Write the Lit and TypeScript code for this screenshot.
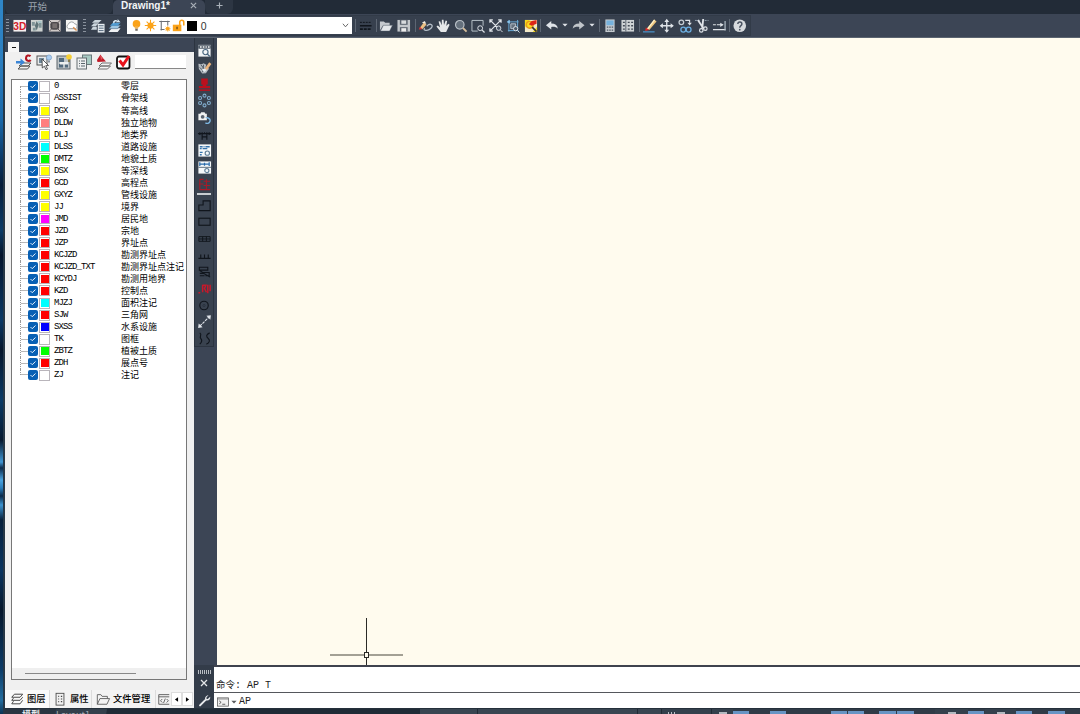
import { LitElement, html, css, svg, SVGTemplateResult, nothing } from "lit";
import { customElement, property } from "lit/decorators.js";

const W = "#dfe3e8";
const K = "#10151c";

/* Every glyph is drawn on a 16 x 16 grid. */
const ICONS: Record<string, SVGTemplateResult> = {
  threeD: svg`<rect x="1.500" y="2" width="13" height="12" fill="#f4f0f0"/><text x="8" y="12" text-anchor="middle" font-size="11.500" font-weight="700" font-family="Liberation Sans, sans-serif" fill="#d2202c" textLength="13.500" lengthAdjust="spacingAndGlyphs">3D</text>`,
  mapA: svg`<rect x="2" y="2" width="12" height="12" fill="#cdd2d0"/><path d="M3 4h3v4H3zM10 5h3v5h-3zM4 10h3v3H4z" fill="#7f9497"/><path d="M8 3l2 4-2 6-2-5z" fill="#5d7377"/><path d="M9 3h4v2H9z" fill="#a7c4c8"/>`,
  mapB: svg`<rect x="2" y="2" width="12" height="12" fill="#cfc9c7"/><rect x="3.500" y="4" width="9" height="8" rx="2.500" fill="#4d494b"/><rect x="5.500" y="5.500" width="5" height="5" fill="#77706f"/><path d="M2 2l3 3M14 2l-3 3M2 14l3-3M14 14l-3-3" stroke="#5b5658"/>`,
  cloud: svg`<rect x="2" y="2" width="12" height="12" fill="#f4f4f2"/><path d="M4.500 11a2.500 2.500 0 0 1 0-4.500 3.500 3.500 0 0 1 6.500-.5 2.600 2.600 0 0 1 1 5z" fill="#fff" stroke="#9a9da0"/><path d="M9.500 9.500l3.500 3.500" stroke="#d98d4d" stroke-width="1.500"/>`,
  layerPanel: svg`<path d="M5 2h7L9 5H2zM4 5.500h5L6 8.500H1zM3 9h4v3H1z" fill="#cbd5dc"/><rect x="8" y="6" width="7" height="9" fill="#e9eef2"/><path d="M9 8h5M9 10.500h5M9 13h5" stroke="#51657a"/>`,
  layerPrev: svg`<path d="M5 10.500h9l-3 4H1.500z" fill="#f0f2f4"/><path d="M5 7.500h9L11 11H2z" fill="#9ec6e2" stroke="#48627a" stroke-width=".5"/><path d="M6 5h8l-3 3H3z" fill="#4f9bd2"/><path d="M6 4c2-3 4-2 5-1V1l3 3.500h-5l1-1C9 3 8 4 7 6z" fill="#d9e9f4"/>`,
  bulb: svg`<circle cx="8" cy="6" r="4.700" fill="#fba319"/><path d="M6 9h4v3H6z" fill="#f2b452"/><path d="M6.500 12h3v2.500h-3z" fill="#736b61"/>`,
  sun: svg`<circle cx="8" cy="8" r="3.800" fill="#fba319"/><path d="M8 1v14M1 8h14M3.200 3.200l9.600 9.600M12.800 3.200l-9.600 9.600" stroke="#fba319" stroke-width="1.300"/>`,
  vpSun: svg`<path d="M3 3h10M3 13h5M4 2v12M12 2v6M1.500 3h3M11 3h3.500" stroke="#6b6f75" stroke-width="1.300" fill="none"/><circle cx="12" cy="12" r="2.300" fill="#fba319"/><path d="M12 8.500v7M8.500 12h7M9.500 9.500l5 5M14.500 9.500l-5 5" stroke="#fba319" stroke-width=".9"/>`,
  unlock: svg`<path d="M1 7h10.500v8H1z" fill="#fba319"/><path d="M9.500 8V4a2.500 2.500 0 0 1 5 0v4" stroke="#fba319" stroke-width="1.900" fill="none"/><path d="M6.200 9.500v3" stroke="#604019" stroke-width="1.500"/>`,
  lines: svg`<path d="M2 4.500h12" stroke="${K}" stroke-dasharray="2 1"/><path d="M2 8h12" stroke="${K}" stroke-width="1.600"/><path d="M2 11.500h12" stroke="${K}" stroke-width="2" stroke-dasharray="3 1"/>`,
  open: svg`<path d="M2 13V3.500h4l1.500 1.500H12V8H5z" fill="#c5c9ce"/><path d="M5.500 7.500H15l-3 6H2.500z" fill="#e4e7ea" stroke="#4b5563" stroke-width=".5"/>`,
  save: svg`<path d="M1.500 2h13v12h-13z" fill="#c3c7cb"/><rect x="4" y="2" width="8" height="5" fill="#59616c"/><rect x="5.500" y="2.500" width="5" height="3.500" fill="#d8dbdd"/><rect x="4" y="9.500" width="8" height="4.500" fill="#59616c"/><rect x="5.500" y="10.500" width="5" height="3.500" fill="#ececec"/>`,
  editLoop: svg`<path d="M2 10l4-5.500 2.800 2.300L4.500 11.500z" fill="#eabf83"/><path d="M.8 11.800L2 9l2.500 2.500z" fill="#d33"/><path d="M7 10.500c-2.500 2 1.500 3 4.500 1.500s4.500-4.500 1.500-5.500c-2-.4-3 1-4 2" stroke="#b5bec8" stroke-width="1.300" fill="none"/><path d="M4 5l3-2 1.500 3z" fill="#f5efe4"/>`,
  hand: svg`<path d="M6 14.500L1.500 8.800l1.400-1 2.400 2L3.700 3.700l1.600-.4 1.600 4.300L7.100 1.700h1.700l.5 5.500L11 2.500l1.500.5-.9 5.200 2.200-2.300 1.300 1L11.500 14.500z" fill="#e6e8e9"/>`,
  zoom: svg`<circle cx="7" cy="7" r="4.400" fill="#65707c" stroke="#b9c0c7" stroke-width="1.200"/><path d="M10.300 10.300l3.700 3.700" stroke="#d5bd9c" stroke-width="1.900"/>`,
  zoomWin: svg`<path d="M8 13.500H2V2.500h11.500V8" fill="none" stroke="#b9c3ca"/><circle cx="10.500" cy="10.500" r="2.500" fill="none" stroke="${W}"/><path d="M12.500 12.500l2.500 2.500" stroke="${W}" stroke-width="1.300"/>`,
  zoomExt: svg`<path d="M2.500 2.500l9 9M13 2.500l-10.500 10.500M2 5V2h3M10.500 2h3v3M2 10.500v3h3" fill="none" stroke="${W}" stroke-width="1.300"/><circle cx="11" cy="10.500" r="2.300" fill="#485463" stroke="${W}"/><path d="M13 12.500l2 2" stroke="${W}"/>`,
  zoomObj: svg`<path d="M2 4h12M3 13h11M4 2v12M13 2v10" stroke="#68a9d6"/><path d="M6 6h5v5H6z" fill="#64707d" stroke="#b8c4cf"/><path d="M2 4l3-2v4z" fill="#8bc5ec"/><circle cx="11" cy="11" r="2.200" fill="#4b5968" stroke="${W}"/><path d="M13 13l2 2" stroke="${W}"/>`,
  redZoom: svg`<rect x="2" y="2" width="12.500" height="12.500" fill="#f2e9c7"/><path d="M2 2h5L2 10zM10 14.500h4.500V9z" fill="#f5d91d"/><circle cx="7" cy="7" r="3.500" fill="#f9dd20" stroke="#e89a18" stroke-width="1.500"/><path d="M6 6.500L9 3l5-1v4L9 8z" fill="#dc2519"/><path d="M9.500 9.500L14 14" stroke="#38322d" stroke-width="1.800"/>`,
  undo: svg`<path d="M2 7.500L7.500 3.200v2.600c4 0 6.300 1.700 6.800 5.200-1.800-1.800-3.800-2.100-6.800-1.800v2.600z" fill="${W}"/>`,
  redo: svg`<path d="M14 7.500L8.500 3.200v2.600c-4 0-6.300 1.700-6.800 5.200 1.800-1.800 3.800-2.100 6.800-1.800v2.600z" fill="#c0c5ca"/>`,
  down: svg`<path d="M1 4.500h14L8 12z" fill="${W}"/>`,
  calc: svg`<rect x="3.500" y="1.500" width="9.500" height="13" fill="#c6cbd0"/><rect x="4.500" y="2.500" width="7.500" height="5" fill="#76b2dd"/><path d="M5 9.500h6.500M5 12.500h6.500" stroke="#4e5966" stroke-width="1.300" stroke-dasharray="1.500 1"/>`,
  sheet: svg`<rect x="1.500" y="2" width="13" height="12" fill="#cfd3d5"/><path d="M6 2v12" stroke="#59626d"/><path d="M3 4.500h2M3 8h2M3 11.500h2M8 4.500h2M8 8h2M8 11.500h2M11.500 4.500h2M11.500 8h2M11.500 11.500h2" stroke="#454d57" stroke-width="1.500"/>`,
  pencil: svg`<path d="M5 11l7.500-9.500 2.500 2L7.500 12.500z" fill="#efc77f"/><path d="M5 11l7.500-9.500 1 .8L6 12z" fill="#fff2c9"/><path d="M3.300 13.500L4 9.800 7.500 12.300z" fill="#dd2d2d"/><path d="M1 14.300h12" stroke="#4a90c6" stroke-width="1.300"/>`,
  move: svg`<path d="M8 2v12M2 8h12" stroke="${W}" stroke-width="1.400"/><path d="M8 .7L10.500 4h-5zM8 15.300L5.500 12h5zM.7 8L4 5.500v5zM15.300 8L12 5.500v5z" fill="${W}"/>`,
  copy: svg`<circle cx="4.500" cy="4.500" r="2.400" fill="none" stroke="#c6cdd3" stroke-width="1.300"/><path d="M8.500 2.500H13V5" fill="none" stroke="${W}" stroke-width="1.200"/><path d="M10.800 5h4.500L13 7.800z" fill="${W}"/><circle cx="6.500" cy="12" r="2.500" fill="none" stroke="#6caee0" stroke-width="1.300"/><circle cx="12" cy="12" r="2.500" fill="none" stroke="#6caee0" stroke-width="1.300"/>`,
  trim: svg`<path d="M1 2.500h5M11 2.500h4" stroke="#96a5b4" stroke-dasharray="2 1"/><path d="M4 2l6 9M9.500 1L8.500 11" stroke="${W}" stroke-width="1.900"/><circle cx="7.500" cy="12.800" r="1.800" fill="none" stroke="${W}" stroke-width="1.200"/><circle cx="11.700" cy="11" r="1.800" fill="none" stroke="${W}" stroke-width="1.200"/>`,
  extend: svg`<path d="M1 7h3M5 7h6M1 12h13" stroke="${W}" stroke-width="1.100"/><path d="M8.500 4.800L12 7 8.500 9.200z" fill="${W}"/><path d="M13.500 3v10" stroke="#adb8c2" stroke-width="1.300"/>`,
  help: svg`<circle cx="8" cy="8" r="6.500" fill="#d7dadd"/><path d="M6 6.200c.2-2.700 4.200-2.600 4.200 0C10.200 8 8 7.800 8 10" fill="none" stroke="#4a5361" stroke-width="1.500"/><circle cx="8" cy="12" r=".9" fill="#4a5361"/>`,

  setCur: svg`<path d="M6 9h9l-3 3H3zM5 12h9l-2.500 3H2z" fill="#f4f4f4" stroke="#555"/><path d="M0 7h4.500V4.500l4.500 3.700-4.500 3.600V9.500H0z" fill="#3b85d6"/><path d="M14.500 2.300c-1.500-1.500-4.500-1-4.500 2s3.500 3.200 4.700 1.700" fill="none" stroke="#b3131f" stroke-width="2.100"/>`,
  pick: svg`<rect x="1" y="2" width="10" height="9" fill="#e8ebec" stroke="#555"/><path d="M3 4h5v5H3z" fill="#71899a"/><path d="M6 5l6.500 6.500-2.700.2 1.700 3.300-1.500.7-1.600-3.500L6.300 14z" fill="#fff" stroke="#333" stroke-width=".8"/><circle cx="13" cy="3.500" r="2.600" fill="#a9cdf1" stroke="#7799c2" stroke-width=".7"/><path d="M12 6.500h2v2h-2z" fill="#8c97a3"/>`,
  pickOn: svg`<rect x="1" y="2" width="13" height="13" fill="#bdc4c8" stroke="#5c646b"/><path d="M3 4h5v4H3zM3 10h4v3.500H3zM9 10h3v3.500H9z" fill="#50697c"/><path d="M4 8h8v2.500H4z" fill="#ecefef"/><circle cx="13" cy="3" r="2.800" fill="#f6cf35"/><path d="M12 5.500h2V8h-2z" fill="#857a4c"/>`,
  compare: svg`<rect x="6.500" y="1" width="9" height="9.500" fill="#a8cbc4" stroke="#68787b"/><rect x="1" y="4" width="9.500" height="11" fill="#eef0f1" stroke="#666e73"/><path d="M3 7h1M5 7h4M3 9.500h1M5 9.500h4M3 12h1M5 12h4" stroke="#59656c" stroke-width="1.200"/>`,
  delLayer: svg`<path d="M6 9h9.500l-3 3H3zM5 12h9.500l-3 3H2z" fill="#f4f4f4" stroke="#727272"/><path d="M1 6L4.500.5 6 3l4 4.500-8.500.5z" fill="#bf1b28"/><path d="M4 1l3 3-2 2z" fill="#e2575d"/>`,
  redCheck: svg`<rect x="2" y="2.500" width="12.500" height="12" rx="2" fill="#fff" stroke="#111" stroke-width="1.800"/><path d="M4.500 6.500l3.500 4.500L14 2" fill="none" stroke="#e8131c" stroke-width="3"/>`,

  codeFind: svg`<rect x="1.500" y="2" width="13" height="12.500" fill="#f2f5f7"/><rect x="1.500" y="2.500" width="13" height="3.500" fill="#34404f"/><path d="M3 4.300h2M6 4.300h2M9 4.300h1.500M11.500 4.300h2" stroke="#fff" stroke-width="1.500"/><circle cx="9" cy="9.700" r="2.800" fill="none" stroke="#48657e" stroke-width="1.200"/><path d="M11 11.700l2.700 2.700" stroke="#48657e" stroke-width="1.300"/>`,
  paint: svg`<path d="M1.500 4l3.500.5L7 3.500l3 1.500-1 3 4 1-3.500 5-4 .5L2 9.500z" fill="#b6bcc2"/><path d="M4 5l5 6M3 8l5 5M7 5l-1 8" stroke="#4b5460"/><path d="M8 9.500L13 2.500l2.300 1.800-5 6.700z" fill="#edb57e"/><path d="M5 10l3-1 2.500 1.700L7.500 13z" fill="#e9eef2"/>`,
  stamp: svg`<path d="M4.500 1.500h7v6.500h-1.500v1.500H14v2.500H2V9.500h4V8H4.500z" fill="#bb101d"/><path d="M2 14h12" stroke="#bb101d" stroke-width="1.600"/>`,
  ring: svg`<g fill="none" stroke="#83afcf" stroke-width="1.100"><circle cx="8" cy="2.800" r="1.600"/><circle cx="3.300" cy="5.300" r="1.600"/><circle cx="12.700" cy="5.300" r="1.600"/><circle cx="3.300" cy="10.600" r="1.600"/><circle cx="12.700" cy="10.600" r="1.600"/><circle cx="8" cy="13.200" r="1.600"/></g>`,
  camera: svg`<path d="M1.500 4h2l1-1.500h3.500L9 4h1.500v7h-9z" fill="#f1f3f3"/><circle cx="6" cy="7.300" r="2" fill="#5b6571"/><path d="M9 13.500a3 3 0 1 0 2-5.200l2.500 1.500" fill="none" stroke="#7eb8e4" stroke-width="1.500"/>`,
  fence: svg`<path d="M1 7h14M5.500 10.500h5M3 5.500v3M13 5.500v3M5.500 5.500v8M10.500 5.500v8M8 5.500V7" stroke="${K}" stroke-width="1.200"/>`,
  codeBox: svg`<rect x="1.500" y="1.500" width="13.500" height="13" fill="#f5f8fa"/><path d="M3 4h3M7 4h1M9 4h4.500M3 6h2M6 6h5" stroke="#3673ac" stroke-width="1.400"/><path d="M3 10h3M3 12.500h2" stroke="#3673ac" stroke-width="1.500"/><circle cx="11" cy="10.800" r="2.300" fill="none" stroke="#5e7d97" stroke-width="1.200"/>`,
  dimBox: svg`<rect x="1.500" y="1.500" width="13.500" height="13" fill="#f5f8fa"/><path d="M3 2.500v4M13 2.500v4M3 4.500h10M8 3v3" stroke="#276aab" stroke-width="1.300"/><path d="M1.500 7.800h13.500" stroke="#567"/><circle cx="10.500" cy="11.200" r="2.200" fill="none" stroke="#5e7d97" stroke-width="1.200"/>`,
  redNote: svg`<path d="M3 2.500v11M3 2.500h4M2 7.500h5M3 13.500h11M7 4.500h7M10 2.500v11M7 9h7" fill="none" stroke="#a81a28" stroke-width="1.200"/>`,
  poly: svg`<path d="M2 13.500V7.500h4.500V3H14v10.500z" fill="none" stroke="${K}" stroke-width="1.200"/>`,
  rect: svg`<rect x="2" y="4.500" width="12" height="7.500" fill="none" stroke="${K}" stroke-width="1.200"/>`,
  bar: svg`<path d="M2 6h12v5H2zM2 8.500h12M6 6v5M10 6v5" fill="none" stroke="${K}" stroke-width="1"/>`,
  comb: svg`<path d="M1.500 11h13M4 11V7M8 11V7M12 11V7" fill="none" stroke="${K}" stroke-width="1.200"/>`,
  scroll: svg`<path d="M2.500 3.500h9v3h-9zM3 7l3 2h7v3.500H9M3 10h4l7 4M3 12.500h5" fill="none" stroke="${K}" stroke-width="1.200"/>`,
  redDot: svg`<path d="M1.500 12.500h2M6 4v8M6 4.500h3.500L8 8l2 4M11.500 4v9M14 4v7" stroke="#c8182a" stroke-width="1.600" fill="none"/>`,
  circle: svg`<circle cx="7.500" cy="8" r="4.500" fill="none" stroke="${K}" stroke-width="1.200"/><circle cx="7.500" cy="8" r="1.200" fill="none" stroke="#252d38" stroke-width=".7"/>`,
  diag: svg`<path d="M3 13L13 3" stroke="${W}" stroke-width="1.200" stroke-dasharray="3 1"/><path d="M14.800 1.200L14.200 6 10 1.800zM1.200 14.800L1.800 10 6 14.200z" fill="${W}"/>`,
  waves: svg`<path d="M3 2c3 2-1 4 1 6s1 4-1 6M13.500 2c-4 2-4 4-1.500 6s1 5-2 6" fill="none" stroke="${K}" stroke-width="1.200"/>`,

  tabLayers: svg`<path d="M5 2.500h9.500L11.500 6H2zM4 7l-2 2.500h9.500L14.500 6M4 10.500L2 13.500h9.500l3-4" fill="none" stroke="#444" stroke-width="1.100"/>`,
  tabProps: svg`<rect x="3.500" y="1.500" width="9" height="13.500" fill="#f1f1f1" stroke="#4c4c4c"/><path d="M6 5h1M9 5h1.500M6 8h1M9 8h1.500M6 11h1M9 11h1.500" stroke="#444" stroke-width="1.200"/>`,
  tabFiles: svg`<path d="M1.500 14V3h4l1.500 2h6v2.500M1.500 14L4.500 7.500H15.500l-3 6.500z" fill="none" stroke="#5a5a5a"/>`,
  tabCode: svg`<path d="M14 14H2V3h12M2 5.500h12M6 8l-2 2 2 2M11 8l2 2-2 2M9.500 7.500l-2 5" fill="none" stroke="#555"/>`,
  left: svg`<path d="M13 1v14L3 8z" fill="#000"/>`,
  right: svg`<path d="M3 1v14l10-7z" fill="#000"/>`,
  close: svg`<path d="M2 2l12 12M14 2L2 14" stroke="currentColor" stroke-width="2.600"/>`,
  plus: svg`<path d="M8 1v14M1 8h14" stroke="currentColor" stroke-width="2.600"/>`,
  wrench: svg`<path d="M2.500 14L9 7.500" stroke="#e8eaec" stroke-width="2.500" stroke-linecap="round"/><path d="M13 1.500L10.500 4v2H12l3-2.500c.5 3-1.500 5-4.500 4.500C7.500 7.500 8 2 13 1.500z" fill="#e8eaec"/>`,
  prompt: svg`<rect x=".7" y="2.500" width="14.600" height="11" fill="#f0f0f0" stroke="#555"/><path d="M1 4h14" stroke="#777"/><path d="M3 6.500l2.500 2L3 10.500M7 11h4" fill="none" stroke="#333"/>`,
  chevron: svg`<path d="M2 4l6 7 6-7" fill="none" stroke="#555" stroke-width="2"/>`,
};

@customElement("cad-icon")
export class CadIcon extends LitElement {
  @property() name = "";
  static styles = css`
    :host { display: flex; flex: none; width: 17.5px; height: 16px; align-items: center; justify-content: center; }
    svg { display: block; flex: none; width: var(--glyph, 15.5px); height: var(--glyph, 15.5px); overflow: visible; }
  `;
  render() {
    return html`<svg viewBox="0 0 16 16">${ICONS[this.name] ?? nothing}</svg>`;
  }
}

const icons = (names: string) => names.split(" ").map((n) => html`<cad-icon name=${n}></cad-icon>`);

const Y = "#ffff00";
const RED = "#ff0000";
const LAYERS: [string, string, string][] = [
  ["0", "零层", "#fff"], ["ASSIST", "骨架线", "#fff"], ["DGX", "等高线", Y],
  ["DLDW", "独立地物", "#ff7f7f"], ["DLJ", "地类界", Y], ["DLSS", "道路设施", "#00ffff"],
  ["DMTZ", "地貌土质", "#00ff00"], ["DSX", "等深线", Y], ["GCD", "高程点", RED],
  ["GXYZ", "管线设施", Y], ["JJ", "境界", Y], ["JMD", "居民地", "#ff00ff"],
  ["JZD", "宗地", RED], ["JZP", "界址点", RED], ["KCJZD", "勘测界址点", RED],
  ["KCJZD_TXT", "勘测界址点注记", RED], ["KCYDJ", "勘测用地界", RED], ["KZD", "控制点", RED],
  ["MJZJ", "面积注记", "#00ffff"], ["SJW", "三角网", RED], ["SXSS", "水系设施", "#0000ff"],
  ["TK", "图框", "#fff"], ["ZBTZ", "植被土质", "#00ff00"], ["ZDH", "展点号", RED], ["ZJ", "注记", "#fff"],
];

@customElement("layer-panel")
export class LayerPanel extends LitElement {
  static styles = css`
    :host { display: flex; flex-direction: column; width: 189px; flex: none; background: #f0f0f0; color: #000; }
    .head { height: 14px; flex: none; background: #3c4555; display: flex; align-items: flex-end; padding-left: 3px; }
    .min { width: 11px; height: 10px; background: #f6f6f6; display: grid; place-items: center; }
    .min::before { content: ""; width: 4px; height: 1px; background: #111; }
    .tools { height: 27px; flex: none; display: flex; align-items: center; padding: 0 7px 7px 9px; box-sizing: border-box; --glyph: 16px; }
    .tools cad-icon { width: 19.900px; }
    .search { width: 51px; height: 14px; margin-left: 2px; background: #fff; border-bottom: 1px solid #888; box-sizing: border-box; }
    .tree { flex: 1; margin: 0 7px 0 6px; border: 1px solid #777; background: #fff; display: flex; flex-direction: column; justify-content: space-between; overflow: hidden; }
    .rows { padding-top: 0.450px; }
    .row { height: 12.040px; display: flex; align-items: center; padding-left: 8px; font: 9px/12px "Liberation Mono", "Noto Sans CJK SC", monospace; white-space: nowrap; }
    .branch { width: 7px; align-self: stretch; flex: none; border-left: 1px dotted #999; background: linear-gradient(#b8b8b8, #b8b8b8) 0 50% / 7px 1px no-repeat; }
    .row:first-child .branch { margin-top: 6px; background-position: 0 0; }
    .row:last-child .branch { margin-bottom: 6px; background-position: 0 100%; }
    .check { width: 10px; height: 10px; flex: none; border-radius: 2px; background: #0860b4; margin-right: 1px; display: grid; place-items: center; }
    .check svg { width: 8px; height: 8px; }
    .color { width: 11px; height: 11px; flex: none; box-sizing: border-box; border: 1px solid #b9b5bb; padding: 0.500px; background-clip: content-box; }
    .code { width: 67px; margin-left: 4px; letter-spacing: -0.900px; }
    .name { font-family: "Noto Sans CJK SC", sans-serif; }
    .scroll { height: 11px; background: #efefef; display: flex; align-items: center; padding-left: 13px; }
    .thumb { width: 111px; height: 1.500px; background: #888; }
    .tabs { height: 18px; flex: none; margin-top: 10px; display: flex; align-items: center; font: 500 9.300px/16px "Noto Sans CJK SC", sans-serif; background: #f3f3f3; color: #000; white-space: nowrap; --glyph: 14px; }
    .tab { display: flex; align-items: center; box-sizing: border-box; height: 18px; border-right: 1px solid #dcdcdc; }
    .tab span { height: 18px; margin-left: 1.500px; }
    .tab.on { width: 45px; padding-left: 3px; background: #fafafa; }
    .tab.p { width: 42px; padding-left: 1px; }
    .tab.f { width: 64px; padding-left: 2px; }
    .tab.c { width: 15px; border: 0; padding-left: 1px; }
    .tab.c cad-icon { width: 14px; }
    .arrow { width: 11px; height: 14px; border: 1px solid #ddd; box-sizing: border-box; background: #fff; display: grid; place-items: center; --glyph: 5px; }
    .arrow cad-icon { width: 5px; height: 5px; }
  `;
  render() {
    return html`
      <div class="head"><div class="min"></div></div>
      <div class="tools">${icons("setCur pick pickOn compare delLayer redCheck")}<div class="search"></div></div>
      <div class="tree">
        <div class="rows">
          ${LAYERS.map(([code, name, color]) => html`
            <div class="row">
              <span class="branch"></span>
              <span class="check"><svg viewBox="0 0 8 8"><path d="M1.500 4l1.700 1.700L6.500 2.500" fill="none" stroke="#e6f1fb" stroke-width="1"/></svg></span>
              <span class="color" style="background-color:${color}"></span>
              <span class="code">${code}</span><span class="name">${name}</span>
            </div>`)}
        </div>
        <div class="scroll"><div class="thumb"></div></div>
      </div>
      <div class="tabs">
        <div class="tab on">${icons("tabLayers")}<span>图层</span></div>
        <div class="tab p">${icons("tabProps")}<span>属性</span></div>
        <div class="tab f">${icons("tabFiles")}<span>文件管理</span></div>
        <div class="tab c">${icons("tabCode")}</div>
        <div class="arrow">${icons("left")}</div>
        <div class="arrow">${icons("right")}</div>
      </div>
    `;
  }
}

/* Status strip segments: kind and width. */
const STATUS: [string, number][] = [
  ["dark", 305], ["mid", 58], ["mid", 160], ["mid", 24], ["ticks", 50], ["lamp", 21], ["on", 17],
  ["off", 20], ["on", 17], ["off", 44], ["on", 17], ["on", 17], ["off", 14], ["on", 18],
  ["on", 18], ["off", 20], ["lamp", 33], ["on", 17], ["lamp", 31], ["on", 17], ["off", 15],
  ["on", 18], ["off", 15],
];

@customElement("app-root")
export class AppRoot extends LitElement {
  static styles = css`
    :host { display: flex; width: 1080px; height: 714px; overflow: hidden; background: #3c4555; font-family: "Liberation Sans", "Noto Sans CJK SC", sans-serif; }
    .desk { width: 5px; flex: none; box-sizing: border-box; border-right: 2px solid #263746;
      background: linear-gradient(#2f86c7 0, #2c7fc0 60px, #1967a8 120px, #0a3765 160px, #061d3a 185px, #0c3c68 230px, #04142c 255px, #0b3966 320px, #06162c 350px, #0a3a66 400px, #05182f 440px, #3f95d2 462px, #0a2a4c 468px, #4aa3df 480px, #287cba 488px, #08294a 496px, #3b93d0 505px, #07203c 520px, #0a3560 570px, #06172c 610px, #0c3c68 670px, #246d9f 700px, #0b3354 714px); }
    .app { flex: 1; min-width: 0; display: flex; flex-direction: column; }
    .docs { height: 14px; flex: none; display: flex; background: #222b37; color: #9ba3ad; font-size: 10px; line-height: 12px; white-space: nowrap; }
    .doc { display: flex; box-sizing: border-box; border-radius: 0 0 6px 6px; }
    .doc.start { width: 108px; padding-left: 23px; background: #2b3441; font-family: "Noto Sans CJK SC", sans-serif; font-size: 9.500px; line-height: 12px; }
    .doc.active { width: 92px; padding: 0 7px 0 8px; justify-content: space-between; background: #3c4555; color: #f3f5f7; font-weight: 700; border-radius: 5px 5px 0 0; }
    .docs cad-icon { width: 9px; height: 11px; --glyph: 7px; color: #aab1b9; }
    .doc.add { width: 28px; justify-content: center; background: #2d3643; }
    .bar { height: 24px; flex: none; box-sizing: border-box; display: flex; align-items: center; background: #3c4555; border-bottom: 1px solid #5b6470; }
    .inner { display: flex; align-items: center; height: 19px; width: 745px; background: #37404e; box-shadow: 0 0 0 1px #323b48; }
    .sep { width: 1px; height: 13px; background: #5d6673; flex: none; }
    .grip { width: 3px; height: 13px; flex: none; background: repeating-linear-gradient(#8a929d 0 1px, transparent 1px 3px); }
    .s1 { margin: 0 1.500px 0 1px; } .s2 { margin: 0 2.500px 0 2.500px; }
    .s3 { margin: 0 0.500px 0 3px; } .s4 { margin: 0 0.700px 0 1.500px; } .s5 { margin: 0 1px 0 2.500px; }
    .s6 { margin: 0 1.700px 0 1px; } .s7 { margin: 0 1px 0 2px; } .s8 { margin: 0 1px 0 2.500px; } .s9 { margin: 0 1px 0 1px; }
    .layer { width: 225px; height: 17px; flex: none; box-sizing: border-box; margin-left: 3.500px; padding: 0 2px; background: #fff; display: flex; align-items: center; font-size: 10.500px; color: #333; }
    .layer cad-icon { width: 14.200px; --glyph: 13px; }
    .swatch { width: 10px; height: 10px; background: #000; margin: 0 4px 0 1px; }
    .layer span { flex: 1; }
    .layer cad-icon.chev { --glyph: 7px; width: 9px; }
    .inner .dd { --glyph: 6px; width: 9.600px; padding-bottom: 2px; }
    .body { flex: 1; min-height: 0; display: flex; }
    .right { flex: 1; min-width: 0; display: flex; flex-direction: column; }
    .work { height: 627px; flex: none; display: flex; }
    .side { width: 23px; flex: none; background: #3c4555; }
    .strip { width: 20px; height: 309px; box-sizing: border-box; border: 1px solid #2c3440; border-top: 0; background: #39424f; display: flex; flex-direction: column; align-items: center; }
    .dots { width: 10px; height: 2px; margin: 2px 0 2.500px; background: repeating-linear-gradient(90deg, #8a929d 0 2px, transparent 2px 3px); }
    .strip cad-icon { height: 16.700px; width: 18px; --glyph: 15px; }
    .rule { width: 14px; height: 2px; background: #c9cdd1; margin: 0.500px 0 1.500px; flex: none; }
    .canvas { flex: 1; position: relative; background: #fffbee; }
    .cross { position: absolute; left: 113px; top: 580px; width: 74px; height: 47px; }
    .cmd { flex: 1; display: flex; }
    .cmdbar { width: 20px; flex: none; display: flex; flex-direction: column; align-items: center; background: #333c49; color: #e5e7e9; }
    .cmdbar .dots { margin: 5px 0 2px; width: 13px; height: 4px; background: repeating-linear-gradient(90deg, #b8bdc3 0 1px, transparent 1px 2px); }
    .cmdbar cad-icon { --glyph: 8px; height: 13px; }
    .cmdbar cad-icon.wr { --glyph: 13px; height: 16px; margin-top: 3px; }
    .lines { flex: 1; display: flex; flex-direction: column; background: #fff; border-top: 2px solid #3f424d; font: 10px/12px "Liberation Mono", "Noto Sans CJK SC", monospace; color: #222; white-space: pre; }
    .hist { height: 26px; box-sizing: border-box; padding: 13px 0 0 2px; line-height: 11px; border-bottom: 1px solid #55575c; }
    .cjk { font-size: 9.500px; }
    .input { flex: 1; display: flex; align-items: center; padding: 1px 0 0 2px; }
    .input cad-icon { width: 13px; --glyph: 12px; }
    .input cad-icon.mini { width: 8px; margin: 0 1px; --glyph: 6px; filter: brightness(0.4); }
    .status { height: 6px; flex: none; display: flex; overflow: hidden; background: #2a3541; border-top: 1px solid #25303b; box-sizing: border-box; }
    .model { width: 110px; flex: none; padding-left: 17px; box-sizing: border-box; color: #e4e8ec; font: 700 9px/9px "Noto Sans CJK SC", sans-serif; background: linear-gradient(100deg, #2a3541 50px, #34404c 51px, #34404c 100px, #202b36 101px); white-space: nowrap; padding-top: 1px; }
    .model span { margin-left: 16px; font-weight: 400; color: #a6adb5; }
    .seg { flex: none; box-sizing: border-box; }
    .dark { background: #202b36; }
    .mid { background: #394551; border-right: 1px solid #202a34; }
    .on { border-top: 2px solid #303b47; border-right: 1px solid #303b47; background: #6794c4; }
    .off { background: #303b47; }
    .ticks { background: repeating-linear-gradient(90deg, #b8bec5 0 1px, transparent 1px 3px) 6px 3px / 8px 2px no-repeat #34404c; border-right: 1px solid #202a34; }
    .lamp { background: linear-gradient(#b2b9c0, #b2b9c0) 50% 3px / 8px 2px no-repeat #34404c; }
  `;
  render() {
    return html`
      <div class="desk"></div>
      <div class="app">
        <div class="docs">
          <div class="doc start">开始</div>
          <div class="doc active"><span>Drawing1*</span>${icons("close")}</div>
          <div class="doc add">${icons("plus")}</div>
        </div>
        <div class="bar">
          <div class="inner">
            <div class="grip s1"></div>${icons("threeD mapA mapB cloud")}
            <div class="grip s2"></div>${icons("layerPanel layerPrev")}
            <div class="layer">${icons("bulb sun vpSun unlock")}<div class="swatch"></div><span>0</span><cad-icon class="chev" name="chevron"></cad-icon></div>
            <div class="sep s3"></div>${icons("lines")}
            <div class="sep s4"></div>${icons("open save")}
            <div class="sep s5"></div>${icons("editLoop hand zoom zoomWin zoomExt zoomObj redZoom")}
            <div class="sep s6"></div>${icons("undo")}<cad-icon class="dd" name="down"></cad-icon>${icons("redo")}<cad-icon class="dd" name="down"></cad-icon>
            <div class="sep s7"></div>${icons("calc sheet")}
            <div class="sep s8"></div>${icons("pencil move copy trim extend")}
            <div class="sep s9"></div>${icons("help")}
          </div>
        </div>
        <div class="body">
          <layer-panel></layer-panel>
          <div class="right">
            <div class="work">
              <div class="side">
                <div class="strip">
                  <div class="dots"></div>
                  ${icons("codeFind paint stamp ring camera fence codeBox dimBox redNote")}
                  <div class="rule"></div>
                  ${icons("poly rect bar comb scroll redDot circle diag waves")}
                </div>
              </div>
              <div class="canvas">
                <svg class="cross" viewBox="0 0 74 47"><path d="M36.500 0V34M36.500 39V47" stroke="#2b2a26"/><path d="M0 37H34M39 37H73" stroke="#a3a094" stroke-width="2"/><rect x="34.500" y="34.500" width="4" height="5" fill="#fffbee" stroke="#2b2a26"/></svg>
              </div>
            </div>
            <div class="cmd">
              <div class="cmdbar"><div class="dots"></div><cad-icon name="close"></cad-icon><cad-icon class="wr" name="wrench"></cad-icon></div>
              <div class="lines">
                <div class="hist"><span class="cjk">命令</span>: AP T</div>
                <div class="input"><cad-icon name="prompt"></cad-icon><cad-icon class="mini" name="down"></cad-icon>AP</div>
              </div>
            </div>
          </div>
        </div>
        <div class="status">
          <div class="model">模型<span>Layout1</span></div>
          ${STATUS.map(([kind, w]) => html`<div class="seg ${kind}" style="width:${w}px"></div>`)}
        </div>
      </div>
    `;
  }
}
